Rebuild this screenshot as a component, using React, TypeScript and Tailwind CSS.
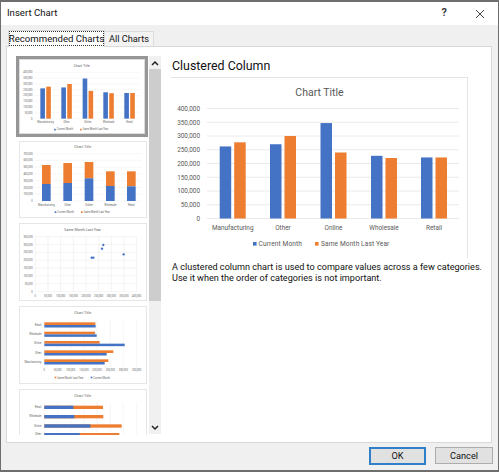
const F = 'Roboto, "Liberation Sans", sans-serif';
const BLUE = "#4472c4";
const ORANGE = "#ed7d31";
const cats = ["Manufacturing", "Other", "Online", "Wholesale", "Retail"];
const cur = [262, 270, 347, 228, 222];
const last = [277, 300, 240, 220, 222];

function MainChart() {
  const y0 = 217.5;
  const k = (217.5 - 107.5) / 400;
  const xs = [220.7, 271, 321.5, 372, 422];
  const labels = ["400,000", "350,000", "300,000", "250,000", "200,000", "150,000", "100,000", "50,000", "0"];
  return (
    <svg viewBox="172 77 297 180" className="block w-[297px] h-[180px]" fontFamily={F}>
      <text x="320.5" y="94.5" fontSize="10.5" fill="#595959" textAnchor="middle">Chart Title</text>
      {labels.map((l, i) => {
        const y = 107.5 + i * 13.75;
        return (
          <g key={l}>
            <line x1="208" x2="460" y1={y} y2={y} stroke="#e4e4e4" strokeWidth="0.8" />
            <text x="201" y={y + 2.4} fontSize="6.4" fill="#595959" textAnchor="end">{l}</text>
          </g>
        );
      })}
      {xs.map((x, i) => (
        <g key={x}>
          <rect x={x} y={y0 - cur[i] * k} width="11.5" height={cur[i] * k} fill={BLUE} />
          <rect x={x + 14.5} y={y0 - last[i] * k} width="11.5" height={last[i] * k} fill={ORANGE} />
          <text x={x + 13} y="229" fontSize="6.4" fill="#595959" textAnchor="middle">{cats[i]}</text>
        </g>
      ))}
      <rect x="254" y="241" width="3.6" height="3.6" fill={BLUE} />
      <text x="259.5" y="245" fontSize="6.6" fill="#595959" letterSpacing="0.1">Current Month</text>
      <rect x="316" y="241" width="3.6" height="3.6" fill={ORANGE} />
      <text x="322" y="245" fontSize="6.6" fill="#595959" letterSpacing="0.1">Same Month Last Year</text>
    </svg>
  );
}

const small = { fontSize: 7.8, fill: "#5f5f5f" };

function Thumb({ top, h = 228, children }: { top: number; h?: number; children: React.ReactNode }) {
  return (
    <svg viewBox={`57 ${top} 378 ${h}`} style={{ height: h / 3 }} className="block w-[126px]" fontFamily={F}>
      {children}
    </svg>
  );
}

function ColumnThumb() {
  const x = [119, 183, 248, 311, 375];
  const y0 = 357;
  const k = (357 - 216) / 400;
  const ys = ["400,000", "350,000", "300,000", "250,000", "200,000", "150,000", "100,000", "50,000", "0"];
  return (
    <Thumb top={177} h={228}>
      <text x="245" y="200" fontSize="11" fill="#666" textAnchor="middle">Chart Title</text>
      {ys.map((l, i) => {
        const y = 216 + i * 17.6;
        return (
          <g key={l}>
            <line x1="100" x2="422" y1={y} y2={y} stroke="#e8e8e8" strokeWidth="1" />
            <text x="95" y={y + 3} textAnchor="end" {...small}>{l}</text>
          </g>
        );
      })}
      {x.map((v, i) => (
        <g key={v}>
          <rect x={v} y={y0 - cur[i] * k} width="14" height={cur[i] * k} fill={BLUE} />
          <rect x={v + 18} y={y0 - last[i] * k} width="14" height={last[i] * k} fill={ORANGE} />
          <text x={v + 16} y="371" textAnchor="middle" {...small}>{cats[i]}</text>
        </g>
      ))}
      <rect x="161" y="388" width="5" height="5" fill={BLUE} />
      <text x="169" y="393" {...small}>Current Month</text>
      <rect x="240" y="388" width="5" height="5" fill={ORANGE} />
      <text x="248" y="393" {...small}>Same Month Last Year</text>
    </Thumb>
  );
}

function StackedThumb() {
  const x = [123, 187, 251, 315, 378];
  const blue = [603 - 552, 603 - 549, 603 - 535, 603 - 558, 603 - 559];
  const tops = [495, 489, 486, 514, 514];
  const ys = ["700,000", "600,000", "500,000", "400,000", "300,000", "200,000", "100,000", "0"];
  return (
    <Thumb top={426} h={225}>
      <text x="245" y="445" fontSize="11" fill="#666" textAnchor="middle">Chart Title</text>
      {ys.map((l, i) => {
        const y = 461 + i * 20.3;
        return (
          <g key={l}>
            <line x1="100" x2="422" y1={y} y2={y} stroke="#e8e8e8" strokeWidth="1" />
            <text x="95" y={y + 3} textAnchor="end" {...small}>{l}</text>
          </g>
        );
      })}
      {x.map((v, i) => (
        <g key={v}>
          <rect x={v} y={tops[i]} width="26" height={603 - blue[i] - tops[i]} fill={ORANGE} />
          <rect x={v} y={603 - blue[i]} width="26" height={blue[i]} fill={BLUE} />
          <text x={v + 13} y="618" textAnchor="middle" {...small}>{cats[i]}</text>
        </g>
      ))}
      <rect x="161" y="634" width="5" height="5" fill={BLUE} />
      <text x="169" y="639" {...small}>Current Month</text>
      <rect x="240" y="634" width="5" height="5" fill={ORANGE} />
      <text x="248" y="639" {...small}>Same Month Last Year</text>
    </Thumb>
  );
}

function ScatterThumb() {
  const vx = [103, 141, 179, 217, 255, 293, 331, 369, 407];
  const hy = [47, 70.5, 94, 117.5, 141, 164.5, 188, 212];
  const xl = ["0", "50,000", "100,000", "150,000", "200,000", "250,000", "300,000", "350,000", "400,000"];
  const yl = ["350,000", "300,000", "250,000", "200,000", "150,000", "100,000", "50,000", "0"];
  const pts = [[272, 110], [277, 110], [303, 83], [307, 72], [368, 100]];
  return (
    <Thumb top={9} h={228}>
      <text x="245" y="31" fontSize="11" fill="#666" textAnchor="middle">Same Month Last Year</text>
      {vx.map((x, i) => (
        <g key={x}>
          <line x1={x} x2={x} y1="47" y2="212" stroke="#dedede" strokeWidth="1" />
          <text x={x} y="227" textAnchor="middle" {...small}>{xl[i]}</text>
        </g>
      ))}
      {hy.map((y, i) => (
        <g key={y}>
          <line x1="103" x2="407" y1={y} y2={y} stroke="#dedede" strokeWidth="1" />
          <text x="95" y={y + 3} textAnchor="end" {...small}>{yl[i]}</text>
        </g>
      ))}
      {pts.map(([x, y]) => (
        <circle key={x} cx={x} cy={y} r="3.5" fill={BLUE} />
      ))}
    </Thumb>
  );
}

function BarThumb() {
  const rows = [
    { l: "Retail", o: 283, b: 284, y: 301 },
    { l: "Wholesale", o: 282, b: 287, y: 329 },
    { l: "Online", o: 296, b: 371, y: 357 },
    { l: "Other", o: 337, b: 317, y: 385 },
    { l: "Manufacturing", o: 322, b: 311, y: 412 },
  ];
  const vx = [130, 170, 209, 249, 288, 328, 367, 407];
  const xl = ["0", "50,000", "100,000", "150,000", "200,000", "250,000", "300,000", "350,000"];
  return (
    <Thumb top={255} h={228}>
      <text x="245" y="277" fontSize="11" fill="#666" textAnchor="middle">Chart Title</text>
      {vx.map((x, i) => (
        <g key={x}>
          <line x1={x} x2={x} y1="290" y2="437" stroke="#e4e4e4" strokeWidth="1" />
          <text x={x} y="448" textAnchor="middle" {...small}>{xl[i]}</text>
        </g>
      ))}
      {rows.map((r) => (
        <g key={r.l}>
          <text x="121" y={r.y + 10} textAnchor="end" {...small}>{r.l}</text>
          <rect x="130" y={r.y} width={r.o - 130} height="8" fill={ORANGE} />
          <rect x="130" y={r.y + 8} width={r.b - 130} height="7.5" fill={BLUE} />
        </g>
      ))}
      <rect x="161" y="464" width="5" height="5" fill={ORANGE} />
      <text x="169" y="470" {...small}>Same Month Last Year</text>
      <rect x="269" y="464" width="5" height="5" fill={BLUE} />
      <text x="277" y="470" {...small}>Current Month</text>
    </Thumb>
  );
}

function StackBarThumb() {
  const rows = [
    { l: "Retail", b: 217, o: 306, y: 548 },
    { l: "Wholesale", b: 220, o: 307, y: 576 },
    { l: "Online", b: 268, o: 362, y: 604 },
    { l: "Other", b: 236, o: 355, y: 630 },
  ];
  const vx = [130, 170, 209, 249, 288, 328, 367, 407];
  return (
    <Thumb top={501} h={144}>
      <text x="245" y="523" fontSize="11" fill="#666" textAnchor="middle">Chart Title</text>
      {vx.map((x) => (
        <line key={x} x1={x} x2={x} y1="538" y2="645" stroke="#e4e4e4" strokeWidth="1" />
      ))}
      {rows.map((r) => (
        <g key={r.l}>
          <text x="121" y={r.y + 7} textAnchor="end" {...small}>{r.l}</text>
          <rect x="130" y={r.y} width={r.o - 130} height="10" fill={ORANGE} />
          <rect x="130" y={r.y} width={r.b - 130} height="10" fill={BLUE} />
        </g>
      ))}
    </Thumb>
  );
}

function Frame({ children, cls }: { children: React.ReactNode; cls: string }) {
  return <div className={`border border-[#e6e6e6] w-[126px] overflow-hidden box-content -ml-px ${cls}`}>{children}</div>;
}

export default function App() {
  return (
    <div
      className="w-[499px] h-[472px] flex flex-col bg-[#f0f0f0] border-x border-t-2 border-b-2 border-[#6e6e6e] overflow-hidden text-[#111]"
      style={{ fontFamily: F }}
    >
      <div className="h-[23px] shrink-0 bg-white flex items-center pl-[6px] pr-[13px]">
        <span className="text-[9.6px] flex-1 -mt-[1px]">Insert Chart</span>
        <span className="text-[11px] font-semibold mr-[28px] text-[#333]">?</span>
        <svg width="10" height="10" viewBox="0 0 10 10" stroke="#444" strokeWidth="1" fill="none">
          <path d="M1 1l8 8M9 1l-8 8" />
        </svg>
      </div>

      <div className="flex-1 flex flex-col min-h-0 pl-[5px] pr-[6px]">
        <div className="h-[21px] shrink-0 flex items-end pl-[2px] relative z-10">
          <div className="h-[17px] w-[97px] bg-white border border-[#d9d9d9] border-b-0 flex items-center justify-center text-[9.6px] whitespace-nowrap outline-1 outline-dotted outline-[#333] -outline-offset-2 -mb-px">
            Recommended Charts
          </div>
          <div className="h-[15px] w-[49px] bg-[#f3f3f3] border border-[#dcdcdc] border-b-0 border-l-0 flex items-center justify-center text-[9.2px] whitespace-nowrap">
            All Charts
          </div>
        </div>

        <div className="h-[397px] shrink-0 bg-white border border-[#d9d9d9] flex">
          <div className="w-[142px] shrink-0 pl-[10px] pt-[9px] h-[388px] overflow-hidden">
            <div className="w-[132px] h-[81px] border-[3px] border-[#969696] box-border flex items-center justify-center -ml-[1px]">
              <div className="w-[126px] h-[75px] border border-[#dcdcdc] overflow-hidden flex items-center justify-center">
                <ColumnThumb />
              </div>
            </div>
            <div className="flex flex-col gap-[5px] mt-[4px] pl-[3px]">
              <Frame cls="h-[75px]"><StackedThumb /></Frame>
              <Frame cls="h-[76px]"><ScatterThumb /></Frame>
              <Frame cls="h-[76px]"><BarThumb /></Frame>
              <Frame cls="h-[60px] border-b-0"><StackBarThumb /></Frame>
            </div>
          </div>

          <div className="w-[12px] shrink-0 mt-[9px] h-[378px] bg-[#f0f0f0] flex flex-col">
            <div className="h-[13px] flex items-center justify-center">
              <svg width="8" height="6" viewBox="0 0 8 6" fill="none" stroke="#222" strokeWidth="1.5">
                <path d="M1 5l3-3 3 3" />
              </svg>
            </div>
            <div className="h-[232px] bg-[#cdcdcd]" />
            <div className="flex-1" />
            <div className="h-[13px] flex items-center justify-center">
              <svg width="8" height="6" viewBox="0 0 8 6" fill="none" stroke="#222" strokeWidth="1.5">
                <path d="M1 1l3 3 3-3" />
              </svg>
            </div>
          </div>

          <div className="flex-1 min-w-0 pl-[11px] pt-[9px]">
            <div className="text-[12.4px] leading-[20px] mb-[1px]">Clustered Column</div>
            <div className="w-[297px] -ml-px border-t border-r border-[#e4e4e4]">
              <MainChart />
            </div>
            <p className="text-[9.1px] leading-[11px] mt-[4px] whitespace-nowrap">
              A clustered column chart is used to compare values across a few categories.
              <br />
              Use it when the order of categories is not important.
            </p>
          </div>
        </div>

        <div className="flex-1 flex items-start justify-end gap-[9px] pt-[4px] -mr-px">
          <button className="w-[57px] h-[18px] bg-[#e1e1e1] border-2 border-[#2f7fc9] text-[9.2px] flex items-center justify-center">OK</button>
          <button className="w-[58px] h-[17px] bg-[#e1e1e1] border border-[#adadad] text-[9.2px] flex items-center justify-center">Cancel</button>
        </div>
      </div>
    </div>
  );
}
